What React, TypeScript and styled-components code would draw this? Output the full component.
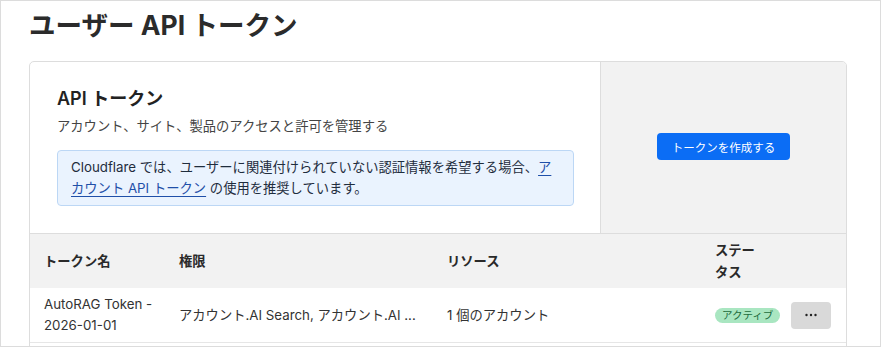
import * as React from 'react';
import styled, { createGlobalStyle } from 'styled-components';

const GlobalStyle = createGlobalStyle`
  html, body {
    margin: 0;
    padding: 0;
    background: #ffffff;
  }
  body {
    font-family: 'Inter', 'Noto Sans CJK JP', sans-serif;
    color: #333333;
  }
`;

interface Token {
  name: string[];
  permissions: string;
  resources: string;
  status: string;
}

const tokens: Token[] = [
  {
    name: ['AutoRAG Token -', '2026-01-01'],
    permissions: 'アカウント.AI Search, アカウント.AI ...',
    resources: '1 個のアカウント',
    status: 'アクティブ',
  },
];

const App: React.FC = () => {
  return (
    <>
      <GlobalStyle />
      <Frame>
        <Title>ユーザー API トークン</Title>
        <Card>
          <Intro>
            <IntroText>
              <Heading>API トークン</Heading>
              <Subtitle>アカウント、サイト、製品のアクセスと許可を管理する</Subtitle>
              <Notice>
                Cloudflare では、ユーザーに関連付けられていない認証情報を希望する場合、
                <NoticeLink href="#">アカウント API トークン</NoticeLink> の使用を推奨しています。
              </Notice>
            </IntroText>
            <IntroAction>
              <PrimaryButton>トークンを作成する</PrimaryButton>
            </IntroAction>
          </Intro>
          <Table>
            <HeadCell>トークン名</HeadCell>
            <HeadCell>権限</HeadCell>
            <HeadCell>リソース</HeadCell>
            <HeadCell>ステータス</HeadCell>
            <HeadCell />
            {tokens.map((t) => (
              <React.Fragment key={t.name.join('')}>
                <Cell>
                  {t.name.map((line) => (
                    <Line key={line}>{line}</Line>
                  ))}
                </Cell>
                <Cell>
                  <Truncate>{t.permissions}</Truncate>
                </Cell>
                <Cell>{t.resources}</Cell>
                <Cell>
                  <Badge>{t.status}</Badge>
                </Cell>
                <Cell>
                  <MenuButton aria-label="メニュー">
                    <svg width="14" height="4" viewBox="0 0 14 4">
                      <circle cx="2.5" cy="2" r="1.2" fill="#222" />
                      <circle cx="7" cy="2" r="1.2" fill="#222" />
                      <circle cx="11.5" cy="2" r="1.2" fill="#222" />
                    </svg>
                  </MenuButton>
                </Cell>
              </React.Fragment>
            ))}
          </Table>
        </Card>
      </Frame>
    </>
  );
};

const Frame = styled.div`
  box-sizing: border-box;
  width: 881px;
  height: 347px;
  border: 1px solid #dcdcdc;
  padding: 0 33px 0 28px;
  overflow: hidden;
`;

const Title = styled.h1`
  margin: 0;
  padding-top: 6px;
  font-size: 26.5px;
  line-height: 36px;
  font-weight: 700;
  color: #2b2b2b;
  margin-bottom: 18px;
`;

const Card = styled.div`
  border: 1px solid #dddddd;
  border-radius: 5px;
  overflow: hidden;
  background: #ffffff;
  padding-bottom: 12px;
`;

const Intro = styled.div`
  display: grid;
  grid-template-columns: 570px 1fr;
  border-bottom: 1px solid #dddddd;
`;

const IntroText = styled.div`
  padding: 23px 26px 27px 27px;
`;

const Heading = styled.h2`
  margin: 0;
  font-size: 18px;
  line-height: 27px;
  font-weight: 600;
  color: #222222;
`;

const Subtitle = styled.p`
  margin: 4px 0 14px;
  font-size: 13.3px;
  line-height: 20px;
  color: #444444;
`;

const Notice = styled.div`
  background: #eaf3fe;
  border: 1px solid #bcd7f5;
  border-radius: 4px;
  padding: 6px 13px;
  font-size: 13.3px;
  line-height: 21px;
  color: #1f2d3d;
`;

const NoticeLink = styled.a`
  color: #1f4fa8;
  text-decoration: underline;
  text-underline-offset: 3px;
`;

const IntroAction = styled.div`
  background: #f2f2f2;
  border-left: 1px solid #dddddd;
  display: flex;
  align-items: center;
  justify-content: center;
  padding-bottom: 2px;
`;

const PrimaryButton = styled.button`
  height: 27px;
  padding: 0 15px;
  border: none;
  border-radius: 4px;
  background: #0b6df5;
  color: #ffffff;
  font-family: inherit;
  font-size: 11.5px;
  cursor: pointer;
`;

const Table = styled.div`
  display: grid;
  grid-template-columns: 135px 268px 268px 76px 1fr;
`;

const HeadCell = styled.div`
  background: #f2f2f2;
  padding: 5px 14px;
  min-height: 44px;
  display: flex;
  align-items: center;
  font-size: 13.3px;
  line-height: 22px;
  font-weight: 600;
  color: #2a2a2a;
  min-width: 0;
`;

const Cell = styled.div`
  padding: 6px 14px;
  min-height: 42px;
  display: flex;
  flex-direction: column;
  justify-content: center;
  font-size: 13.3px;
  line-height: 21px;
  color: #333333;
  border-bottom: 1px solid #e6e6e6;
  min-width: 0;
`;

const Line = styled.div`
  white-space: nowrap;
`;

const Truncate = styled.span`
  white-space: nowrap;
  overflow: hidden;
  text-overflow: ellipsis;
`;

const Badge = styled.span`
  align-self: flex-start;
  white-space: nowrap;
  background: #a9e6c1;
  color: #1d6a3c;
  border-radius: 8px;
  padding: 0 7px;
  font-size: 10.5px;
  line-height: 15px;
`;

const MenuButton = styled.button`
  width: 40px;
  height: 27px;
  border: none;
  border-radius: 4px;
  background: #d9d9d9;
  display: flex;
  align-items: center;
  justify-content: center;
  padding: 0;
  cursor: pointer;
`;

export default App;
